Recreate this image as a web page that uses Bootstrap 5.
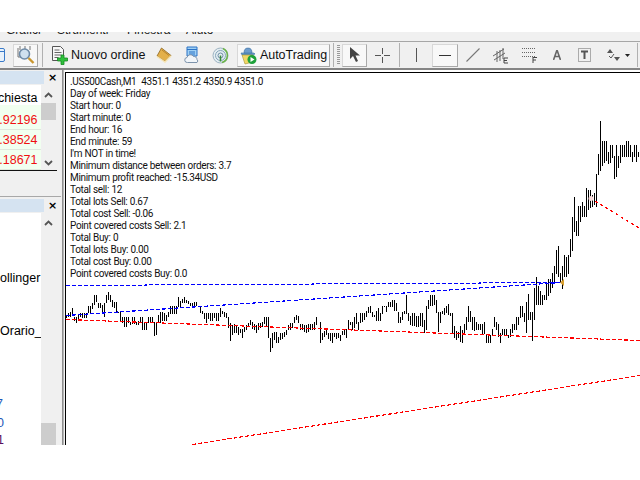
<!DOCTYPE html>
<html lang="it">
<head>
<meta charset="utf-8">
<title>MT4</title>
<link rel="stylesheet" href="https://cdn.jsdelivr.net/npm/bootstrap@5.3.0/dist/css/bootstrap.min.css">
<style>
html,body{margin:0;background:#fff;overflow:hidden}
body{font-family:"Roboto","Liberation Sans",sans-serif;color:#000}
.app{width:640px;height:480px}
.topgap{height:32px;background:#fff}
.menubar{height:9px;background:#f0f0f0;overflow:hidden;font:12px/12px "Liberation Sans",sans-serif;color:#222}
.menubar span{display:block;margin-top:-8px;white-space:nowrap}
.m1{margin-left:6px;width:51px}.m2{width:70px}.m3{width:59px}
.toolbar{height:29px;background:#f0f0f0;border-top:1px solid #a6a6a6;border-bottom:2px solid #858585;overflow:hidden}
.toolbar>*{flex:none}
.sepv{width:1px;height:24px;background:#b0b0b0}
.pressed{height:23px;background:#f8f8f8;border:1px solid #fff;border-right-color:#a9a9a9;border-bottom-color:#a9a9a9;border-left-color:#d8d8d8;border-top-color:#d8d8d8}
.lbl{font:12.5px/16px "Liberation Sans",sans-serif;color:#111;white-space:nowrap}
.t-doc{margin-left:-10px}.t-zoom{margin-left:7px;width:25px}.t-s1{margin-left:4px}
.t-new{margin-left:9px}.t-nuovo{margin-left:2px;width:75px}
.t-book{margin-left:10px}.t-cloud{margin-left:12px}.t-radio{margin-left:12px}
.t-auto{margin-left:8px;width:93px;padding-left:2px}.auto-text{margin-left:3px;letter-spacing:-.05px}.t-s2{margin-left:3px}
.t-grip{margin-left:3px;width:3px;height:20px;background:repeating-linear-gradient(#999 0 1px,#f0f0f0 1px 2px)}
.t-arrow{margin-left:2px;width:25px}.t-cross{margin-left:8px}.t-s3{margin-left:9px}
.t-v{margin-left:15px}.t-h{margin-left:14px;width:26px}.t-trend{margin-left:8px}
.t-chan{margin-left:12px}.t-fibo{margin-left:13px}.t-a{margin-left:16px}
.t-t{margin-left:17px}.t-ar{margin-left:15px}.t-caret{margin-left:5px}.t-s4{margin-left:7px}
.mainrow{height:375px}
.sidepane{width:61px;background:#f0f0f0}
.splitter{width:4px;background:linear-gradient(90deg,#f0f0f0 0 1px,#8f8f8f 1px 2px,#b5b5b5 2px 3px,#f4f4f4 3px)}
.titlebar{height:13px;width:44px;background:#d5e3f1}
.closex{width:17px;font:bold 11px/13px "DejaVu Sans",sans-serif;text-align:center}
.paneone{height:126px;padding-top:1px}
.panetwo{border-top:1px solid #a8a8a8;padding-top:2px;height:249px}
.under-title{margin-top:1px}
.gridlist{width:41px;background:#fff}
.hcell{height:20px;font:12.5px/26px "Liberation Sans",sans-serif;white-space:nowrap;overflow:hidden}
.vcell{height:20px;background:#f1fff0;border-bottom:1px solid #dfe8dd;color:#f01010;font:12.5px/20px "Liberation Sans",sans-serif;overflow:hidden;white-space:nowrap}
.vfirst{height:25px;padding-top:5px}
.scrolly{width:15px;background:#f0f0f0;color:#555;margin-right:5px}
.arrow-up{margin-top:7px}
.thumb1{height:17px;background:#cdcdcd;margin-top:5px}
.arrow-down{margin-top:40px}
.thumb2{height:24px;background:#cdcdcd}
.endline{height:1px;width:57px;background:#111}
.listbox{width:41px;background:#fff;font:12.5px/14px "Liberation Sans",sans-serif;overflow:hidden;white-space:nowrap}
.li1{margin-top:58px}.li2{margin-top:39px}.li3{margin-top:59px;margin-left:-4px;color:#1d58b8}.li4{margin-top:5px;margin-left:-3px;color:#1d58b8}.li5{margin-top:3px;margin-left:-3px;color:#5a1060}
.chartbox{width:575px;height:373px;margin-top:2px;border-top:1px solid #000;border-left:1px solid #000;background:#fff;position:relative;overflow:hidden}
.chartsvg{position:absolute;left:0;top:0}
.infotext{position:relative;padding:3px 0 0 4px;font-size:10px;letter-spacing:-.35px;word-spacing:.3px;line-height:12px;white-space:pre;color:#111}
.bottomgap{height:35px;background:#fff}
</style>
</head>
<body>
<div class="app d-flex flex-column">
  <div class="topgap"></div>
  <div class="menubar d-flex"><span class="m1">Grafici</span><span class="m2">Strumenti</span><span class="m3">Finestra</span><span>Aiuto</span></div>
  <div class="toolbar d-flex align-items-center">
    <svg class="t-doc" width="16" height="16" viewBox="0 0 16 16"><rect x="1.5" y="1.5" width="13" height="13" rx="1.5" fill="#e9f2fb" stroke="#3b7bc9"/><path d="M2 4.5h12" stroke="#3b7bc9"/></svg>
    <div class="t-zoom pressed d-flex align-items-center justify-content-center">
      <svg width="20" height="20" viewBox="0 0 20 20"><path d="M4 1v4M9 1v4M14 1v4M2 3v9h3" fill="none" stroke="#777"/><circle cx="8.500" cy="9" r="5" fill="#cfe0ee" stroke="#6d8aa6" stroke-width="1.600"/><path d="M12.500 13l5 5" stroke="#c9962e" stroke-width="2.400"/></svg>
    </div>
    <div class="sepv t-s1"></div>
    <svg class="t-new" width="17" height="19" viewBox="0 0 17 19"><path d="M.5 .5h8l3 3v11H.5z" fill="#f7f7f7" stroke="#555"/><path d="M2.500 4h5M2.500 6.500h7M2.500 9h7M2.500 11.500h4" stroke="#666"/><path d="M9 9h3v3h3.500v3H12v3.500H9V15H5.500v-3H9z" fill="#2fbf3c" stroke="#138a1f" stroke-width=".8"/></svg>
    <span class="lbl t-nuovo">Nuovo ordine</span>
    <svg class="t-book" width="16" height="16" viewBox="0 0 16 16"><path d="M5.500 1L15 8.500 9 14.500 1 9z" fill="#e3b04a" stroke="#8c6420" stroke-width=".8"/><path d="M1 9.500l8 5.500 6-6" fill="none" stroke="#f5e4b4" stroke-width="1.500"/><path d="M6 3l7 5.500" stroke="#b8842d"/></svg>
    <svg class="t-cloud" width="16" height="18" viewBox="0 0 16 18"><path d="M3 1h10v9H3z" fill="#9fd0f4" stroke="#2a72c6"/><path d="M3 3.500h10M5 6h6M5 8h6" stroke="#2a72c6"/><path d="M3.500 16.500a2.500 2.500 0 0 1-.5-5 3.500 3.500 0 0 1 6.500-1 3 3 0 0 1 3.500 3 2 2 0 0 1 0 3z" fill="#f1f5f9" stroke="#7d93ab"/></svg>
    <svg class="t-radio" width="17" height="17" viewBox="0 0 17 17"><circle cx="8.500" cy="8.500" r="7.500" fill="#e4edf2" stroke="#9db3c2"/><circle cx="8.500" cy="8.500" r="5" fill="none" stroke="#86a6bb"/><circle cx="8.500" cy="8.500" r="2.500" fill="none" stroke="#6c8da3"/><path d="M11 1.500a7.500 7.500 0 0 1-1 14" fill="none" stroke="#6cb34a" stroke-width="1.500"/><path d="M8.500 8.500v6" stroke="#3a8a3a" stroke-width="1.500"/></svg>
    <div class="t-auto pressed d-flex align-items-center">
      <svg width="17" height="19" viewBox="0 0 17 19"><path d="M1 7h13l1 1-2 1H2z" fill="#6b9fd0" stroke="#3b6f9f" stroke-width=".6"/><path d="M4 7c0-3 1-5 4-5s4 2 4 5z" fill="#6e9ccc" stroke="#3b6f9f" stroke-width=".6"/><path d="M2 9h11v7l-8 2z" fill="#f1d766" stroke="#a5902f" stroke-width=".6"/><circle cx="12" cy="13.500" r="4.500" fill="#1ea13a"/><path d="M10.500 11l4 2.500-4 2.500z" fill="#fff"/></svg>
      <span class="lbl auto-text">AutoTrading</span>
    </div>
    <div class="sepv t-s2"></div>
    <div class="t-grip"></div>
    <div class="t-arrow pressed d-flex align-items-center justify-content-center">
      <svg width="11" height="16" viewBox="0 0 11 16"><path d="M1 0v12l3-3 3 6 2-1-2.500-5.500H11z" fill="#444"/></svg>
    </div>
    <svg class="t-cross" width="15" height="15" viewBox="0 0 15 15"><path d="M7.500 0v6M7.500 9v6M0 7.500h6M9 7.500h6" stroke="#555"/></svg>
    <div class="sepv t-s3"></div>
    <svg class="t-v" width="3" height="14" viewBox="0 0 3 14"><path d="M1.500 0v14" stroke="#555"/></svg>
    <div class="t-h pressed d-flex align-items-center justify-content-center">
      <svg width="12" height="3" viewBox="0 0 12 3"><path d="M0 1.500h12" stroke="#333"/></svg>
    </div>
    <svg class="t-trend" width="14" height="14" viewBox="0 0 14 14"><path d="M.5 13.500l13-13" stroke="#777" stroke-width="1.100"/></svg>
    <svg class="t-chan" width="17" height="17" viewBox="0 0 17 17"><path d="M1 9l11-7M2 13L13 6M5 4v11M8 3v11M11 1v11" stroke="#666" fill="none"/><path d="M12 11h4M12 11v5h4M12 13.500h3" stroke="#444" fill="none"/></svg>
    <svg class="t-fibo" width="15" height="16" viewBox="0 0 15 16"><path d="M0 1.500h13M0 5.500h13M0 9.500h13" stroke="#666" stroke-dasharray="1 1"/><path d="M11 10v6M11 10.500h4M11 13h3" stroke="#444" fill="none"/></svg>
    <svg class="t-a" width="8" height="10" viewBox="0 0 8 10"><path d="M.5 10L4 0l3.500 10M2 6.500h4" fill="none" stroke="#666" stroke-width="1.600"/></svg>
    <svg class="t-t" width="13" height="14" viewBox="0 0 13 14"><rect x=".5" y=".5" width="12" height="13" fill="none" stroke="#666" stroke-dasharray="1 1"/><path d="M3 3.500h7M6.500 3.500v7.500" stroke="#555" stroke-width="2"/></svg>
    <svg class="t-ar" width="14" height="14" viewBox="0 0 14 14"><path d="M1 5l3-4 3 4z" fill="#555"/><path d="M8 9l3 4 3-4z" fill="#555"/><path d="M3 8l2 2 3-4" fill="none" stroke="#555"/></svg>
    <svg class="t-caret" width="5" height="3" viewBox="0 0 5 3"><path d="M0 0h5L2.500 3z" fill="#222"/></svg>
    <div class="sepv t-s4"></div>
  </div>
  <div class="mainrow d-flex">
    <div class="sidepane d-flex flex-column">
      <div class="paneone">
        <div class="d-flex"><div class="titlebar"></div><div class="closex">×</div></div>
        <div class="d-flex under-title justify-content-between">
          <div class="gridlist">
            <div class="hcell d-flex justify-content-end">chiesta&nbsp;</div>
            <div class="vcell vfirst d-flex justify-content-end">0.92196&nbsp;</div>
            <div class="vcell d-flex justify-content-end">1.38524&nbsp;</div>
            <div class="vcell d-flex justify-content-end">1.18671&nbsp;</div>
          </div>
          <div class="scrolly">
            <svg class="d-block mx-auto arrow-up" width="9" height="6" viewBox="0 0 9 6"><path d="M1 5l3.500-3.500L8 5" fill="none" stroke="#555" stroke-width="1.800"/></svg>
            <div class="thumb1"></div>
            <svg class="d-block mx-auto arrow-down" width="9" height="6" viewBox="0 0 9 6"><path d="M1 1l3.500 3.500L8 1" fill="none" stroke="#555" stroke-width="1.800"/></svg>
          </div>
        </div>
        <div class="endline"></div>
      </div>
      <div class="panetwo d-flex flex-column">
        <div class="d-flex"><div class="titlebar"></div><div class="closex">×</div></div>
        <div class="d-flex under-title justify-content-between flex-grow-1">
          <div class="listbox">
            <div class="li1">ollinger</div>
            <div class="li2">Orario_1</div>
            <div class="li3">7</div>
            <div class="li4">0</div>
            <div class="li5">1</div>
          </div>
          <div class="scrolly d-flex flex-column">
            <svg class="d-block mx-auto arrow-up" width="9" height="6" viewBox="0 0 9 6"><path d="M1 5l3.500-3.500L8 5" fill="none" stroke="#555" stroke-width="1.800"/></svg>
            <div class="flex-grow-1"></div>
            <div class="thumb2"></div>
          </div>
        </div>
      </div>
    </div>
    <div class="splitter"></div>
    <div class="chartbox">
      <svg class="chartsvg" id="plot" width="575" height="373" viewBox="66 73 575 373" shape-rendering="crispEdges">
        <path id="bars" fill="none" stroke="#000"/>
        <path d="M66 285.500H146L146 284.500H313L313 283.500H480L480 282.500H562" fill="none" stroke="#0000ff" stroke-width="1.200" stroke-dasharray="4 2"/>
        <path d="M66 315.500L562 282.500" fill="none" stroke="#0000ff" stroke-width="1.150" stroke-dasharray="4 2"/>
        <path d="M66 319.500L640 340.500" fill="none" stroke="#ff0000" stroke-width="1.150" stroke-dasharray="4 2"/>
        <path d="M192 444.500L640 375.500" fill="none" stroke="#ff0000" stroke-width="1.150" stroke-dasharray="4 2"/>
        <path d="M590 198L640 228.500" fill="none" stroke="#ff0000" stroke-width="1.150" stroke-dasharray="3 3"/>
        <circle cx="591" cy="198.500" r="2.500" fill="#f9dcdc" shape-rendering="auto"/>
        <path d="M560 282.500L564 279V286z" fill="#d9a02e" shape-rendering="auto"/>
      </svg>
      <div class="infotext">.US500Cash,M1  4351.1 4351.2 4350.9 4351.0
Day of week: Friday
Start hour: 0
Start minute: 0
End hour: 16
End minute: 59
I'm NOT in time!
Minimum distance between orders: 3.7
Minimum profit reached: -15.34USD
Total sell: 12
Total lots Sell: 0.67
Total cost Sell: -0.06
Point covered costs Sell: 2.1
Total Buy: 0
Total lots Buy: 0.00
Total cost Buy: 0.00
Point covered costs Buy: 0.0</div>
    </div>
  </div>
  <div class="bottomgap"></div>
</div>
<script src="https://cdn.jsdelivr.net/npm/bootstrap@5.3.0/dist/js/bootstrap.bundle.min.js"></script>
<script>
// high/low pairs of each 2px bar, read off the chart
var a=[105,115,100,112,95,110,85,108,110,122,110,128,105,120,100,112,100,115,100,115,100,115,78,100,78,100,68,88,45,75,45,65,68,85,70,85,75,95,68,112,45,68,35,60,45,65,60,80,65,85,65,100,95,100,93,125,110,128,110,140,112,140,110,130,125,135,112,132,112,132,125,135,122,135,112,125,112,150,125,150,125,150,112,130,112,130,112,128,125,168,130,165,105,130,95,128,95,122,100,122,105,122,95,110,78,102,78,102,78,102,78,102,52,82,62,82,58,70,52,68,60,70,62,72,68,78,68,80,65,78,65,78,78,82,78,100,92,102,98,118,100,130,100,118,100,122,100,122,100,115,100,122,98,122,85,112,92,102,95,112,98,115,112,145,130,182,135,165,132,160,135,160,140,165,148,158,148,175,140,155,135,150,130,142,120,135,125,148,132,150,135,160,130,150,130,145,125,140,112,132,112,142,112,175,175,215,158,205,155,180,155,188,170,188,160,180,160,178,155,170,150,165,135,150,130,150,128,145,112,130,105,120,108,130,132,150,132,150,135,155,135,160,132,155,132,150,132,150,125,150,112,135];
var b=[155,218,188,210,182,200,178,195,188,208,188,212,188,218,188,200,188,208,188,205,195,212,182,195,178,195,178,205,150,180,155,165,155,180,140,175,128,162,155,180,128,160,128,155,128,150,122,142,112,130,108,130,125,142,135,140,122,152,115,152,130,152,108,132,108,112,108,125,95,110,95,110,90,110,90,122,100,122,125,158,140,158,125,150,122,132,75,132,128,152,138,165,128,168,128,168,138,170,138,170,128,168,130,170,150,188,108,180,90,118,75,108,75,108,75,105,90,130,125,185,125,158,122,132,115,135,108,130,102,135,128,138,130,190,168,205,182,210,185,205,168,215,180,218,162,192,140,180,108,155,122,155,140,180,140,182,155,180,162,180,162,180,162,195,155,192,195,218,195,218,195,218,178,198,140,170,155,180,162,200,190,218,178,195,178,195,178,195,195,205,178,200,162,190,162,180,140,180,140,165,108,145,108,140,130,155,95,190,72,150,125,150,125,212];
var c=[565,660,532,615,558,615,572,615,585,615,585,600,548,600,538,588,538,578,520,565,498,550,450,522,438,532,520,545,498,568,465,532,472,532,465,522,418,470,350,452,292,395,362,408,318,408,318,365,305,352,318,352,265,350,270,330,270,325,285,322,278,315,222,320,162,225,63,212,123,198,123,190,123,182,155,192,135,190,135,175,168,238,135,232,168,205,135,190,135,172,135,172,123,172,123,172,135,172,155,185,135,172,135,185,155,172];
var d="",i;
for(i=0;i<a.length;i+=2){d+="M"+(66+i+.5)+" "+Math.round(280+a[i]/3)+"V"+Math.round(280+a[i+1]/3);}
for(i=0;i<b.length;i+=2){d+="M"+(320+i+.5)+" "+Math.round(270+b[i]/3)+"V"+Math.round(270+b[i+1]/3);}
for(i=0;i<c.length;i+=2){d+="M"+(534+i+.5)+" "+Math.round(100+c[i]/3)+"V"+Math.round(100+c[i+1]/3);}
document.getElementById("bars").setAttribute("d",d);
</script>
</body>
</html>
